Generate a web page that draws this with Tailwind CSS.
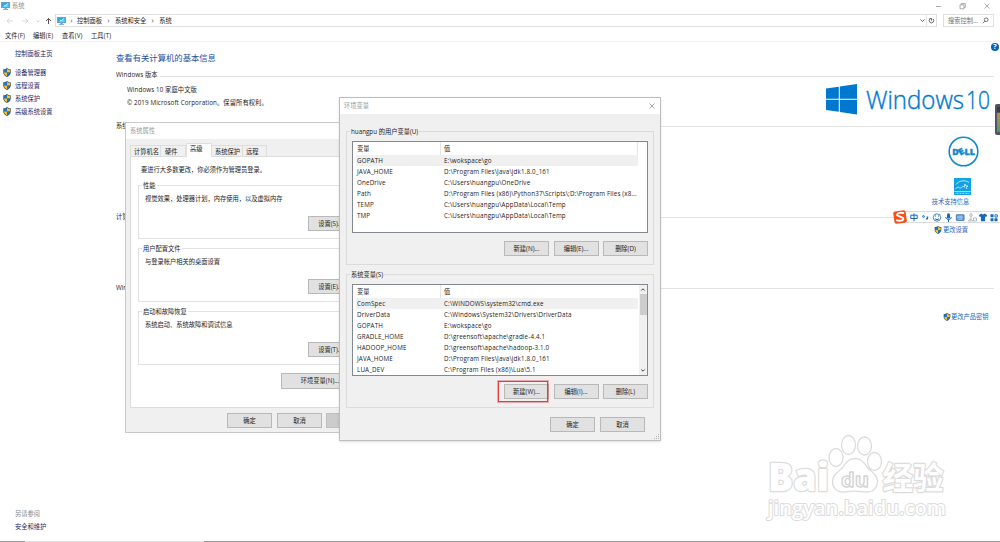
<!DOCTYPE html>
<html>
<head>
    <meta charset="UTF-8">
    <meta name="viewport" content="width=device-width, initial-scale=1.0">
    <title>系统</title>
    <script src="https://cdn.jsdelivr.net/npm/@tailwindcss/browser@4"></script>
    <style>
        body {
            font-family: 'Open Sans', 'Noto Sans CJK SC', sans-serif;
        }
    </style>
</head>
<body class="relative w-[1000px] h-[542px] overflow-hidden bg-white text-[6.25px] leading-[10px] text-[#1c1c1c] whitespace-nowrap">

    <!-- Shared icons -->
    <svg class="hidden">
        <symbol id="shield" viewBox="0 0 16 18">
            <path d="M8 0C6 2 3 2.600 .5 2.500V9c0 4 3.500 7 7.500 9 4-2 7.500-5 7.500-9V2.500C13 2.600 10 2 8 0z" fill="#4a5560"/>
            <path d="M8 1.800C6.300 3.200 4 3.800 2 3.800V9h6z" fill="#1976d2"/>
            <path d="M8 1.800c1.700 1.400 4 2 6 2V9H8z" fill="#fcc419"/>
            <path d="M2 9c0 3.300 2.800 5.800 6 7.500V9z" fill="#fcc419"/>
            <path d="M14 9c0 3.300-2.800 5.800-6 7.500V9z" fill="#1976d2"/>
        </symbol>
        <symbol id="computer" viewBox="0 0 18 16">
            <rect x=".5" y=".5" width="17" height="11" fill="#2aa6e8" stroke="#5b95bd"/>
            <path d="M2 10L15 2v8z" fill="#6bcbf7"/>
            <path d="M6 5.500l2.500 2.500 4.500-5" fill="none" stroke="#fff" stroke-width="1.500"/>
            <path d="M7 12h4v2H7zM4 14h10v1.500H4z" fill="#5a9cc5"/>
        </symbol>
    </svg>

    <!-- Title bar -->
    <header class="flex h-[12px] items-center pl-px pr-[10px] text-[#8c8c8c]">
        <svg class="w-[9px] h-[8px]"><use href="#computer"/></svg>
        <span class="ml-[2px]">系统</span>
        <svg class="ml-auto mb-px w-[54px] h-[8px]" viewBox="0 0 54 8" fill="none" stroke="#8a8a8a" stroke-width=".7">
            <path d="M0 4.500h5M48.500 1.500l5 5M53.500 1.500l-5 5"/>
            <path d="M24 2.800h4v4h-4zM25.300 2.800V1.500h4v4H28"/>
        </svg>
    </header>

    <!-- Address bar -->
    <div class="flex h-[17px] items-center pr-[6px]">
        <svg class="w-[55px] h-[12px]" viewBox="0 0 55 12" fill="none" stroke-width=".8">
            <path d="M13 6H7M9.500 3.500L7 6l2.500 2.500M22 6h6M25.500 3.500L28 6l-2.500 2.500M36.500 5.500L38 7l1.500-1.500" stroke="#cfcfcf"/>
            <path d="M48.500 9V3.500M46 6l2.500-2.500L51 6" stroke="#555" stroke-width="1"/>
        </svg>
        <div class="flex h-[13px] w-[882px] items-center border border-[#dfdfdf] pl-px">
            <svg class="w-[9px] h-[8px]"><use href="#computer"/></svg>
            <span class="w-[11px] text-center">›</span>
            <span>控制面板</span>
            <span class="w-[13px] text-center">›</span>
            <span>系统和安全</span>
            <span class="w-[13px] text-center">›</span>
            <span>系统</span>
            <svg class="ml-auto w-[17px] h-[11px]" viewBox="0 0 17 11" fill="none" stroke="#555" stroke-width=".9">
                <path d="M1.500 4.500l2 2 2-2"/>
                <path d="M7.500 0v11" stroke="#e2e2e2"/>
                <path d="M11 4a2.200 2.200 0 1 0 3 0M10.500 3.500h2v2"/>
            </svg>
        </div>
        <div class="ml-auto flex h-[13px] w-[51px] items-center justify-between border border-[#dfdfdf] pl-[4px] pr-[4px] text-[#707070]">
            <span>搜索控制...</span>
            <svg class="w-[7px] h-[7px]" viewBox="0 0 7 7" fill="none" stroke="#555" stroke-width=".8">
                <circle cx="4.200" cy="2.700" r="1.900"/><path d="M2.800 4.100L.8 6.200"/>
            </svg>
        </div>
    </div>

    <!-- Menu bar -->
    <nav class="flex h-[13px] items-center gap-[8px] border-b border-[#f1f1f1] pl-[5px] pt-[2px] tracking-[0.1px]">
        <span class="w-[20px]">文件(F)</span>
        <span class="w-[21px]">编辑(E)</span>
        <span class="w-[21px]">查看(V)</span>
        <span class="w-[21px]">工具(T)</span>
    </nav>

    <div class="flex h-[499px]">
        <!-- Sidebar -->
        <aside class="flex w-[116px] flex-col pt-[7px] text-[#1d2a6b]">
            <a class="h-[10px] pl-[15px]">控制面板主页</a>
            <ul class="mt-[7px] pl-[3px]">
                <li class="flex h-[13px] items-center gap-[4px]"><svg class="w-[8px] h-[9px]"><use href="#shield"/></svg>设备管理器</li>
                <li class="flex h-[13px] items-center gap-[4px]"><svg class="w-[8px] h-[9px]"><use href="#shield"/></svg>远程设置</li>
                <li class="flex h-[13px] items-center gap-[4px]"><svg class="w-[8px] h-[9px]"><use href="#shield"/></svg>系统保护</li>
                <li class="flex h-[13px] items-center gap-[4px]"><svg class="w-[8px] h-[9px]"><use href="#shield"/></svg>高级系统设置</li>
            </ul>
            <div class="mt-auto mb-[9px] pl-[15px]">
                <p class="h-[13px] text-[#858585]">另请参阅</p>
                <p class="h-[10px]">安全和维护</p>
            </div>
        </aside>

        <!-- Content -->
        <main class="w-[878px]">
            <h1 class="h-[28px] pt-[11px] text-[8.33px] text-[#24509f]">查看有关计算机的基本信息</h1>
            <section class="h-[51px]">
                <h2 class="flex h-[10px] items-center gap-[2px] tracking-[0.1px]">Windows 版本<span class="mt-[2px] h-px flex-1 bg-[#e2e2e2]"></span></h2>
                <div class="flex justify-between">
                    <div class="pl-[11px] pt-[3px] leading-[13px] tracking-[0.1px]">
                        <p>Windows 10 家庭中文版</p>
                        <p>© 2019 Microsoft Corporation。保留所有权利。</p>
                    </div>
                    <div class="flex items-start pr-[4px] pt-[4px] text-[#0078d0]">
                        <svg class="w-[31px] h-[31px]" viewBox="0 0 31 31" fill="currentColor">
                            <path d="M0 4.500l12.800-1.800v12.100H0zM13.800 2.500L31 0v14.800H13.800zM0 15.800h12.800v12L0 26zM13.800 15.800H31V30.500l-17.200-2.400z"/>
                        </svg>
                        <svg class="ml-[9px] w-[124px] h-[38px] -mb-[7px] overflow-visible font-light" viewBox="0 0 124 38" fill="currentColor" stroke="currentColor" stroke-width=".4">
                            <text x="0" y="24.500" font-size="25.500" textLength="98" lengthAdjust="spacingAndGlyphs">Windows</text>
                            <text x="100" y="24.500" font-size="25.500" textLength="24" lengthAdjust="spacingAndGlyphs">10</text>
                        </svg>
                    </div>
                </div>
            </section>
            <section class="h-[91px]">
                <h2 class="flex h-[10px] items-center gap-[2px]">系统<span class="mt-px h-px flex-1 bg-[#e2e2e2]"></span></h2>
                <div class="flex w-[68px] flex-col items-center ml-[813px] pt-[5px] text-[#1a67c0]">
                    <svg class="w-[31px] h-[31px]" viewBox="0 0 31 31">
                        <circle cx="15.500" cy="15.500" r="14.300" fill="#fff" stroke="#1289cc" stroke-width="1.600"/>
                        <text x="4.200" y="18.800" font-size="9" font-weight="800" fill="#1289cc" stroke="#1289cc" stroke-width=".4" textLength="6.500" lengthAdjust="spacingAndGlyphs">D</text>
                        <text x="10.300" y="18.800" font-size="9" font-weight="800" fill="#1289cc" stroke="#1289cc" stroke-width=".4" transform="rotate(-32 13 15.500)" textLength="5.500" lengthAdjust="spacingAndGlyphs">E</text>
                        <text x="16.500" y="18.800" font-size="9" font-weight="800" fill="#1289cc" stroke="#1289cc" stroke-width=".4" textLength="10.500" lengthAdjust="spacingAndGlyphs">LL</text>
                    </svg>
                    <svg class="mt-[11px] mr-px w-[17px] h-[17px]" viewBox="0 0 17 17">
                        <path d="M0 0h17v17H0z" fill="#10a3e4"/>
                        <path d="M2 6.500C5 2.500 11 1.500 15 4.500M1.500 10.500c1.500-.5 2-1.500 3-1.500s.5 1.500 2 1 1.500-1.500 2.500-1.500.5 1 1.500.7M10 9l1-3 .8 1.900 2.200.1-1.800 1.300.6 1.700" fill="none" stroke="#fff" stroke-width=".7"/>
                        <path d="M0 13.500h17" stroke="#d5effb" stroke-width=".7"/>
                        <path d="M1.500 15.300h14" stroke="#b5e2f7" stroke-width="1" stroke-dasharray="1 .5"/>
                    </svg>
                    <span class="mt-[2px] mr-[25px]">技术支持信息</span>
                </div>
            </section>
            <section class="h-[71px]">
                <h2 class="flex h-[10px] items-center gap-[2px]">计算机名、域和工作组设置<span class="mt-px h-px flex-1 bg-[#e2e2e2]"></span></h2>
                <a class="ml-[818px] mt-[3px] flex items-center gap-px text-[#1a67c0]"><svg class="w-[8px] h-[8px]"><use href="#shield"/></svg>更改设置</a>
            </section>
            <section>
                <h2 class="flex h-[10px] items-center gap-[2px]">Windows 激活<span class="mt-px h-px flex-1 bg-[#e2e2e2]"></span></h2>
                <a class="ml-[827px] mt-[19px] flex items-center text-[#1a67c0]"><svg class="w-[8px] h-[8px]"><use href="#shield"/></svg>更改产品密钥</a>
            </section>
        </main>
    </div>

    <!-- Help badge -->
    <div class="absolute left-[991px] top-[43px] flex size-[8px] items-center justify-center rounded-full bg-[#0a62b8] text-[7px] font-bold text-white">?</div>

    <!-- Desktop meter on the right edge -->
    <div class="absolute left-[995px] top-[104px] h-[31px] w-[8px] rounded-[2px] bg-[#50555f] pl-[2px] pt-[3px]">
        <div class="h-[5px] w-[3px] bg-[#363b47]"></div>
        <div class="mt-px h-[19px] w-[3px] bg-linear-to-b from-[#b58a4c] to-[#3d9b7c]"></div>
    </div>

    <!-- Input method toolbar -->
    <div class="absolute left-[893px] top-[210px] flex h-[14px] w-[107px] items-center">
        <div class="absolute inset-x-0 left-[6px] top-px h-[12px] border-y border-[#dcdcdc] bg-white"></div>
        <svg class="relative w-[107px] h-[14px]" viewBox="0 0 107 14">
            <rect x=".8" y=".8" width="12.500" height="12.500" rx="2" fill="#f4511e" transform="rotate(-8 7 7)"/>
            <path d="M11 3.200C8 2.200 4.200 2.800 4 4.700c-.2 2 6.300 2 6.300 4 0 2.200-4 2.500-7 1.500" fill="none" stroke="#fff" stroke-width="1.900"/>
            <g fill="none" stroke="#1769b5" stroke-width="1">
                <path d="M17.800 5.200h6.400v3.300h-6.400zM21 3.300v8"/>
                <circle cx="30.500" cy="6.500" r=".9"/>
                <path d="M34.500 6.500v1.300l-1 1.700" stroke-width="1.500"/>
                <circle cx="44" cy="7.500" r="3.700" stroke-width=".8"/>
                <path d="M42 8.500c1 1.500 3 1.500 4 0M42 6h1M45 6h1"/>
                <path d="M52.800 7c0 3.500 5.400 3.500 5.400 0M55.500 9.500V12"/>
            </g>
            <rect x="54" y="3.300" width="3" height="5.500" rx="1.500" fill="#1769b5"/>
            <rect x="63.300" y="4.700" width="7.800" height="5.800" rx=".6" fill="#6f9dd0" stroke="#1769b5" stroke-width=".7"/>
            <path d="M64.500 6.300h5.500M64.500 7.700h5.500M65.500 9.200h3.500" stroke="#fff" stroke-width=".6" stroke-dasharray=".8 .5"/>
            <g fill="none" stroke="#9da9b8" stroke-width=".8"><circle cx="78" cy="5" r="1.300"/><path d="M78 6.500v3M75.500 11c0-2 4-2 4 0zM80.500 8h3v3h-3z"/></g>
            <path d="M87.800 3.800l-2 1.600 1.100 1.700 1-.5v4.600h4.200V6.600l1 .5 1.100-1.700-2-1.600h-1.200c-.4.900-1.600.9-2 0z" fill="#1769b5"/>
            <path d="M97.500 4.300h3v3h-3zM97.500 8.200h3v3h-3zM101.500 8.200h3v3h-3z" fill="#1769b5"/>
            <path d="M102 4.800h2.300v2.300H102z" fill="none" stroke="#1769b5" stroke-width=".9"/>
        </svg>
    </div>

    <!-- System properties window -->
    <div class="absolute left-[125px] top-[122px] flex h-[311px] w-[251px] flex-col border border-[#c9c9c9] bg-[#f0f0f0]">
        <div class="h-[16px] bg-white pl-[4px] pt-[3px] text-[#999]">系统属性</div>
        <div class="ml-[4px] mt-[4px] flex h-[13px] items-end">
            <div class="h-[11px] w-[31px] border border-b-0 border-[#dedede] pl-[3px] pt-px">计算机名</div>
            <div class="h-[11px] w-[25px] border border-b-0 border-l-0 border-[#dedede] pl-[4px] pt-px">硬件</div>
            <div class="relative z-10 -mb-px h-[14px] w-[26px] border border-b-0 border-[#dedede] bg-white pl-[3px]">高级</div>
            <div class="h-[11px] w-[31px] border border-b-0 border-l-0 border-[#dedede] pl-[3px] pt-px">系统保护</div>
            <div class="h-[11px] w-[24px] border border-b-0 border-l-0 border-[#dedede] pl-[3px] pt-px">远程</div>
        </div>
        <div class="mx-[4px] h-[252px] border border-[#dcdcdc] bg-white pl-[7px] pr-[7px] pt-[8px]">
            <p class="h-[17px] pl-[3px]">要进行大多数更改，你必须作为管理员登录。</p>
            <fieldset class="h-[57px] border border-[#e2e2e2] pl-[6px]">
                <legend class="-ml-[3px] h-[7px] px-px leading-[7px]">性能</legend>
                <p class="mt-[5px]">视觉效果，处理器计划，内存使用，以及虚拟内存</p>
                <button class="ml-[163px] mt-[12px] h-[15px] w-[45px] border border-[#b8b8b8] bg-[#e1e1e1]">设置(S)...</button>
            </fieldset>
            <fieldset class="mt-[6px] h-[57px] border border-[#e2e2e2] pl-[6px]">
                <legend class="-ml-[3px] h-[7px] px-px leading-[7px]">用户配置文件</legend>
                <p class="mt-[5px]">与登录帐户相关的桌面设置</p>
                <button class="ml-[163px] mt-[12px] h-[15px] w-[45px] border border-[#b8b8b8] bg-[#e1e1e1]">设置(E)...</button>
            </fieldset>
            <fieldset class="mt-[6px] h-[57px] border border-[#e2e2e2] pl-[6px]">
                <legend class="-ml-[3px] h-[7px] px-px leading-[7px]">启动和故障恢复</legend>
                <p class="mt-[5px]">系统启动、系统故障和调试信息</p>
                <button class="ml-[163px] mt-[12px] h-[15px] w-[45px] border border-[#b8b8b8] bg-[#e1e1e1]">设置(T)...</button>
            </fieldset>
            <button class="ml-[143px] mt-[8px] h-[16px] w-[78px] border border-[#b8b8b8] bg-[#e1e1e1]">环境变量(N)...</button>
        </div>
        <div class="mt-[5px] flex gap-[5px] pl-[101px]">
            <button class="h-[15px] w-[45px] border border-[#b8b8b8] bg-[#e1e1e1]">确定</button>
            <button class="h-[15px] w-[45px] border border-[#b8b8b8] bg-[#e1e1e1]">取消</button>
            <button class="-ml-px h-[15px] w-[45px] border border-[#bfbfbf] bg-[#cccccc] text-[#888]">应用(A)</button>
        </div>
    </div>

    <!-- Environment variables window -->
    <div class="absolute left-[339px] top-[97px] h-[344px] w-[322px] border border-[#bdbdbd] bg-[#f0f0f0] shadow-sm">
        <div class="flex h-[16px] items-center justify-between bg-white pl-[4px] pr-[5px] text-[#999]">
            <span>环境变量</span>
            <svg class="w-[6px] h-[6px]" viewBox="0 0 6 6" stroke="#888" stroke-width=".7"><path d="M.5 .5l5 5M5.500 .5l-5 5"/></svg>
        </div>

        <fieldset class="mx-[6px] mt-[14px] h-[137px] border border-[#dcdcdc] px-[5px]">
            <legend class="-ml-[2px] h-[7px] px-px leading-[7px]">huangpu 的用户变量(U)</legend>
            <div class="mt-[6px] h-[92px] border border-[#828790] bg-white pl-[3px]">
                <div class="flex h-[13px] leading-[13px]">
                    <span class="w-[85px] border-r border-[#e5e5e5] pl-px">变量</span>
                    <span class="w-[197px] border-r border-[#e5e5e5] pl-[3px]">值</span>
                </div>
                <div class="grid w-[282px] auto-rows-[10.95px] grid-cols-[87px_1fr] pl-px leading-[11.5px] tracking-[0.15px] bg-linear-to-b from-[#f0f0f0] from-[11px] to-white to-[11px]">
                    <span>GOPATH</span><span>E:\wokspace\go</span>
                    <span>JAVA_HOME</span><span>D:\Program Files\Java\jdk1.8.0_161</span>
                    <span>OneDrive</span><span>C:\Users\huangpu\OneDrive</span>
                    <span>Path</span><span>D:\Program Files (x86)\Python37\Scripts\;D:\Program Files (x8...</span>
                    <span>TEMP</span><span>C:\Users\huangpu\AppData\Local\Temp</span>
                    <span>TMP</span><span>C:\Users\huangpu\AppData\Local\Temp</span>
                </div>
            </div>
            <div class="mt-[8px] flex justify-end gap-[4.5px]">
                <button class="h-[15px] w-[45px] border border-[#b8b8b8] bg-[#e1e1e1]">新建(N)...</button>
                <button class="h-[15px] w-[45px] border border-[#b8b8b8] bg-[#e1e1e1]">编辑(E)...</button>
                <button class="h-[15px] w-[45px] border border-[#b8b8b8] bg-[#e1e1e1]">删除(D)</button>
            </div>
        </fieldset>

        <fieldset class="mx-[6px] mt-[6px] h-[137px] border border-[#dcdcdc] px-[5px]">
            <legend class="-ml-[2px] h-[7px] px-px leading-[7px]">系统变量(S)</legend>
            <div class="mt-[6px] flex h-[92px] justify-between border border-[#828790] bg-white pl-[3px]">
                <div class="w-[282px]">
                    <div class="flex h-[13px] leading-[13px]">
                        <span class="w-[85px] border-r border-[#e5e5e5] pl-px">变量</span>
                        <span class="pl-[3px]">值</span>
                    </div>
                    <div class="grid auto-rows-[10.95px] grid-cols-[87px_1fr] pl-px leading-[11px] tracking-[0.15px] bg-linear-to-b from-[#f0f0f0] from-[11px] to-white to-[11px]">
                        <span>ComSpec</span><span>C:\WINDOWS\system32\cmd.exe</span>
                        <span>DriverData</span><span>C:\Windows\System32\Drivers\DriverData</span>
                        <span>GOPATH</span><span>E:\wokspace\go</span>
                        <span>GRADLE_HOME</span><span>D:\greensoft\apache\gradle-4.4.1</span>
                        <span>HADOOP_HOME</span><span>D:\greensoft\apache\hadoop-3.1.0</span>
                        <span>JAVA_HOME</span><span>D:\Program Files\Java\jdk1.8.0_161</span>
                        <span>LUA_DEV</span><span>C:\Program Files (x86)\Lua\5.1</span>
                    </div>
                </div>
                <div class="flex w-[8px] flex-col items-center bg-[#f0f0f0]">
                    <svg class="w-[8px] h-[9px]" viewBox="0 0 8 9" fill="none" stroke="#444"><path d="M2.300 5.500L4 3.800l1.700 1.700"/></svg>
                    <div class="h-[21px] w-[7px] bg-[#cdcdcd]"></div>
                    <svg class="mt-auto w-[8px] h-[9px]" viewBox="0 0 8 9" fill="none" stroke="#444"><path d="M2.300 3.500L4 5.200l1.700-1.700"/></svg>
                </div>
            </div>
            <div class="mt-[8px] flex justify-end gap-[4.5px]">
                <button class="h-[15px] w-[45px] border border-[#b8b8b8] bg-[#e1e1e1]">新建(W)...</button>
                <button class="h-[15px] w-[45px] border border-[#b8b8b8] bg-[#e1e1e1]">编辑(I)...</button>
                <button class="h-[15px] w-[45px] border border-[#b8b8b8] bg-[#e1e1e1]">删除(L)</button>
            </div>
        </fieldset>

        <div class="mt-[9px] flex justify-end gap-[5px] pr-[15px]">
            <button class="h-[15px] w-[45px] border border-[#b8b8b8] bg-[#e1e1e1]">确定</button>
            <button class="h-[15px] w-[45px] border border-[#b8b8b8] bg-[#e1e1e1]">取消</button>
        </div>
        <svg class="absolute bottom-0 right-0 w-[6px] h-[6px]" viewBox="0 0 6 6" fill="#b5b5b5"><path d="M4 0h1v1H4zM4 2h1v1H4zM2 2h1v1H2zM4 4h1v1H4zM2 4h1v1H2zM0 4h1v1H0z"/></svg>
    </div>

    <!-- Highlight around the new button -->
    <div class="absolute left-[498px] top-[381px] h-[21px] w-[50px] border-[1.5px] border-[#e93a40] outline-[0.5px] outline-[#e93a40]/40"></div>

    <!-- Watermark -->
    <svg class="absolute left-[760px] top-[430px] w-[200px] h-[96px] font-bold" viewBox="0 0 200 96" fill="#fff" stroke="#dcdcdc" stroke-width="1.300" stroke-linejoin="round">
        <text x="8" y="60.500" font-size="39" font-weight="800" textLength="61" lengthAdjust="spacingAndGlyphs" stroke-width="2.500" paint-order="stroke">Bai</text>
        <ellipse cx="76" cy="27.500" rx="7" ry="9"/>
        <ellipse cx="88.500" cy="15" rx="7" ry="9.500"/>
        <ellipse cx="104.500" cy="16" rx="7" ry="9"/>
        <ellipse cx="114.500" cy="31.500" rx="7" ry="9"/>
        <path d="M95 28.500c-6 0-9 4-12 8.500-4 5-10.500 7-10.500 14.500C72.500 57 76 62 83 62c4 0 7-.8 12-.8s8 .8 12 .8c7 0 10.500-5 10.500-10.500 0-7.500-6.500-9.500-10.500-14.500-3-4.500-6-8.500-12-8.500z"/>
        <text x="81" y="57" font-size="19" textLength="28" lengthAdjust="spacingAndGlyphs" stroke="#d4d4d4">du</text>
        <text x="122.500" y="58.500" font-size="31" textLength="61" lengthAdjust="spacingAndGlyphs" stroke-width="2.500" paint-order="stroke">经验</text>
        <text x="8" y="85" font-size="20" font-weight="600" textLength="178" lengthAdjust="spacingAndGlyphs" stroke-width="2" paint-order="stroke">jingyan.baidu.com</text>
    </svg>

    <!-- Taskbar edge -->
    <div class="absolute inset-x-0 bottom-0 flex h-px bg-[#9b9b9b]">
        <div class="ml-[25px] w-[179px] bg-[#e0e0e0]"></div>
    </div>
</body>
</html>
